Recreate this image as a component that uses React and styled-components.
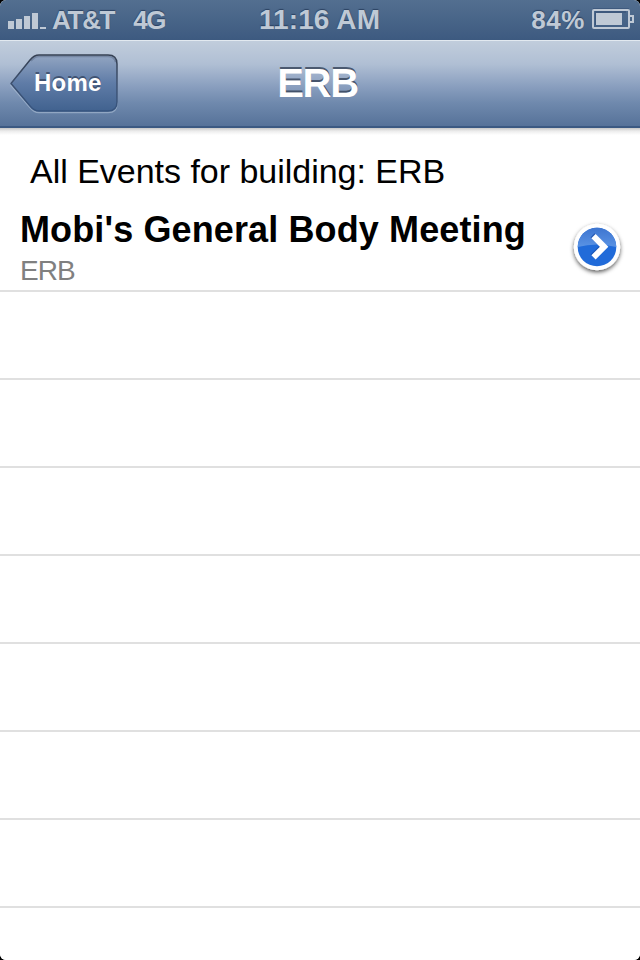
import React from "react";
import styled, { createGlobalStyle } from "styled-components";

const GlobalStyle = createGlobalStyle`
  * { box-sizing: border-box; }
  body { margin: 0; background: #000; font-family: "Liberation Sans", Arial, Helvetica, sans-serif; }
`;

const Screen = styled.main`
  width: 640px;
  height: 960px;
  overflow: hidden;
  border-radius: 6px;
  background: #fff;
`;

const StatusBar = styled.div`
  display: grid;
  grid-template-columns: 1fr auto 1fr;
  align-items: center;
  height: 40px;
  padding: 0 6px 0 8px;
  background: linear-gradient(#536f90, #3d5a80);
  color: #bfc9d5;
  font-weight: bold;
  text-shadow: 0 -1px 1px rgba(25, 45, 75, 0.65);
`;

const StatusGroup = styled.div`
  display: flex;
  align-items: center;
  justify-content: ${(p) => (p.$end ? "flex-end" : "flex-start")};
`;

const StatusText = styled.span`
  font-size: ${(p) => p.$size || 26}px;
  line-height: 40px;
  white-space: nowrap;
  letter-spacing: ${(p) => p.$spacing || 0}px;
  margin-left: ${(p) => p.$gap || 0}px;
`;

const Clock = styled(StatusText)`
  margin-right: 3px;
`;

const StatusIcon = styled.svg`
  display: block;
  flex: none;
  margin-left: ${(p) => p.$gap || 0}px;
`;

const NavBar = styled.header`
  display: grid;
  grid-template-columns: 1fr auto 1fr;
  height: 88px;
  padding-left: 9px;
  border-top: 1px solid #e2e9f0;
  border-bottom: 2px solid #3b5982;
  background: linear-gradient(#c1cddc 0%, #b0bfd4 27%, #8a9fbf 53%, #6f89ad 73%, #567299 100%);
`;

const BackButton = styled.button`
  display: grid;
  width: 112px;
  height: 62px;
  margin: 12px 0 0;
  padding: 0;
  border: 0;
  background: none;
  color: #fff;
  font: bold 24px/60px "Liberation Sans", Arial, sans-serif;
  text-shadow: 0 -2px 0 rgba(40, 55, 80, 0.65);
  text-align: left;

  > * { grid-area: 1 / 1; }
`;

const BackLabel = styled.span`
  padding-left: 25px;
  letter-spacing: 0.2px;
`;

const NavTitle = styled.h1`
  margin: 0;
  padding-right: 14px;
  color: #fff;
  font-size: 40px;
  line-height: 84px;
  letter-spacing: -1.3px;
  text-shadow: 0 -2px 0 rgba(45, 58, 80, 0.75);
`;

const Content = styled.section`
  height: 832px;
  background: linear-gradient(#c6c6c6, #ececec 3px, #fff 7px);
`;

const SectionTitle = styled.h2`
  height: 76px;
  margin: 0;
  padding: 4px 0 0 30px;
  font-size: 34px;
  font-weight: normal;
  line-height: 78px;
  white-space: nowrap;
  letter-spacing: -0.02px;
`;

const EventList = styled.ul`
  margin: 0;
  padding: 0;
  list-style: none;
`;

const EventRow = styled.li`
  display: flex;
  justify-content: space-between;
  height: 88px;
  padding: 0 13px 0 20px;
  border-bottom: 2px solid #e0e0e0;
`;

const EventName = styled.div`
  padding-top: 5px;
  font-size: 36px;
  font-weight: bold;
  line-height: 42px;
  white-space: nowrap;
  letter-spacing: 0.12px;
`;

const EventPlace = styled.div`
  color: #808080;
  font-size: 28px;
  line-height: 40px;
  letter-spacing: -1px;
`;

const Disclosure = styled.svg`
  display: block;
  flex: none;
  margin-top: 12px;
`;

function Signal() {
  return (
    <StatusIcon width="38" height="18" viewBox="0 0 38 18">
      <path fill="#bfc9d5" d="M0 10h6v8H0zM8 8h6v10H8zM16 5h6v13h-6zM24 2h6v16h-6zM32 16h6v2h-6z" />
    </StatusIcon>
  );
}

function Battery() {
  return (
    <StatusIcon $gap={7} width="42" height="24" viewBox="0 0 42 24">
      <path fill="none" stroke="#2f4a70" strokeOpacity=".5" strokeWidth="2" d="M1 1h36M4 17V4h30" />
      <rect x="1" y="2" width="36" height="18" rx="1" fill="none" stroke="#bfc9d5" strokeWidth="2" />
      <path fill="#bfc9d5" d="M4 5h26v12H4z" />
      <path fill="none" stroke="#bfc9d5" strokeWidth="2" d="M38 8h3v6h-3" />
    </StatusIcon>
  );
}

function BackShape() {
  return (
    <svg width="112" height="62" viewBox="0 0 112 62">
      <defs>
        <linearGradient id="backFill" x2="0" y2="1">
          <stop stopColor="#93a6c2" />
          <stop offset=".5" stopColor="#5f7ca7" />
          <stop offset="1" stopColor="#41628f" />
        </linearGradient>
        <linearGradient id="backEdge" x2="0" y2="1">
          <stop stopColor="#364153" />
          <stop offset=".5" stopColor="#3d506f" />
          <stop offset="1" stopColor="#36547f" />
        </linearGradient>
      </defs>
      <path transform="translate(0 1.5)" fill="none" stroke="#a9bbd2" strokeOpacity=".65" strokeWidth="1.5" d="M2 31 21 7Q25 2 30 2H99Q108 2 108 11V49Q108 58 99 58H30Q25 58 21 53Z" />
      <path fill="url(#backFill)" stroke="url(#backEdge)" strokeWidth="1.5" strokeLinejoin="round" d="M2 30.5 21 7Q25 2 30 2H99Q108 2 108 11V49Q108 58 99 58H30Q25 58 21 53Z" />
      <path fill="none" stroke="#374760" strokeOpacity=".3" strokeWidth="1.5" d="M22 8Q26 3.5 30 3.5H99Q105 3.5 106.5 9" />
    </svg>
  );
}

function DisclosureIcon() {
  return (
    <Disclosure width="60" height="66" viewBox="0 0 60 66">
      <defs>
        <filter id="discShadow" x="-30%" y="-30%" width="160%" height="170%">
          <feDropShadow dx="0" dy="2" stdDeviation="2" floodColor="#000" floodOpacity=".65" />
        </filter>
        <linearGradient id="discGloss" x2="0" y2="1">
          <stop stopColor="#3d75d0" />
          <stop offset="1" stopColor="#5a93e4" />
        </linearGradient>
      </defs>
      <circle cx="30" cy="31" r="23.2" fill="#fff" filter="url(#discShadow)" />
      <circle cx="30" cy="31" r="19.3" fill="#216bd9" />
      <path fill="url(#discGloss)" d="M10.7 31a19.3 19.3 0 0 1 38.6 0Q30 26 10.7 31Z" />
      <path fill="none" stroke="#1648a5" strokeOpacity=".65" strokeWidth="5.5" d="M25.5 19.3 36 30 25.5 40.5" />
      <path fill="none" stroke="#fff" strokeWidth="6" d="M26.5 20.2 37.1 30.8 26.5 41.4" />
    </Disclosure>
  );
}

const emptyRows = [1, 2, 3, 4, 5, 6, 7];

export default function App() {
  return (
    <>
      <GlobalStyle />
      <Screen>
        <StatusBar>
          <StatusGroup>
            <Signal />
            <StatusText $gap={6} $spacing={-1.3}>AT&amp;T</StatusText>
            <StatusText $gap={19} $spacing={-1.4}>4G</StatusText>
          </StatusGroup>
          <Clock $size={28} $spacing={0.1}>11:16 AM</Clock>
          <StatusGroup $end>
            <StatusText $spacing={0.6}>84%</StatusText>
            <Battery />
          </StatusGroup>
        </StatusBar>
        <NavBar>
          <BackButton>
            <BackShape />
            <BackLabel>Home</BackLabel>
          </BackButton>
          <NavTitle>ERB</NavTitle>
        </NavBar>
        <Content>
          <SectionTitle>All Events for building: ERB</SectionTitle>
          <EventList>
            <EventRow>
              <div>
                <EventName>Mobi's General Body Meeting</EventName>
                <EventPlace>ERB</EventPlace>
              </div>
              <DisclosureIcon />
            </EventRow>
            {emptyRows.map((row) => (
              <EventRow key={row} />
            ))}
          </EventList>
        </Content>
      </Screen>
    </>
  );
}
